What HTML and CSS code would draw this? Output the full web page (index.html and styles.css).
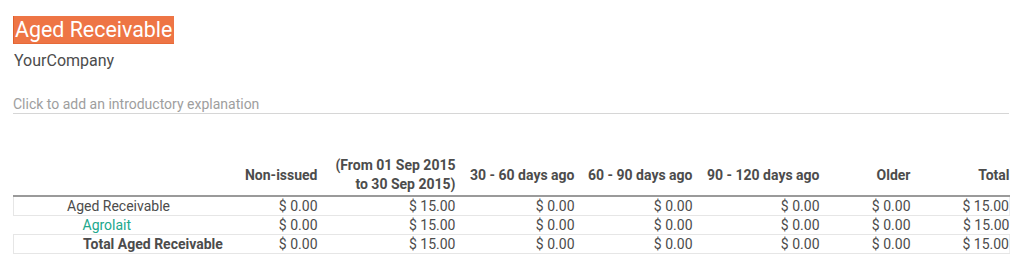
FILE: index.html
```html
<!DOCTYPE html>
<html>
<head>
<meta charset="utf-8">
<link rel="stylesheet" href="styles.css">
</head>
<body>
<div class="page">
  <div class="title-row"><span class="title">Aged Receivable</span></div>
  <div class="company">YourCompany</div>
  <div class="intro">Click to add an introductory explanation</div>
  <table class="report">
    <colgroup>
      <col class="c1"><col class="c2"><col class="c3"><col class="c4"><col class="c5"><col class="c6"><col class="c7"><col class="c8">
    </colgroup>
    <thead>
      <tr>
        <th></th>
        <th>Non-issued</th>
        <th>(From 01 Sep 2015<br>to 30 Sep 2015)</th>
        <th>30 - 60 days ago</th>
        <th>60 - 90 days ago</th>
        <th>90 - 120 days ago</th>
        <th>Older</th>
        <th>Total</th>
      </tr>
    </thead>
    <tbody>
      <tr class="boxed">
        <td class="name lvl1">Aged Receivable</td>
        <td>$ 0.00</td><td>$ 15.00</td><td>$ 0.00</td><td>$ 0.00</td><td>$ 0.00</td><td>$ 0.00</td><td>$ 15.00</td>
      </tr>
      <tr>
        <td class="name lvl2 partner">Agrolait</td>
        <td>$ 0.00</td><td>$ 15.00</td><td>$ 0.00</td><td>$ 0.00</td><td>$ 0.00</td><td>$ 0.00</td><td>$ 15.00</td>
      </tr>
      <tr class="boxed">
        <td class="name lvl2 total">Total Aged Receivable</td>
        <td>$ 0.00</td><td>$ 15.00</td><td>$ 0.00</td><td>$ 0.00</td><td>$ 0.00</td><td>$ 0.00</td><td>$ 15.00</td>
      </tr>
    </tbody>
  </table>
</div>
</body>
</html>
```

FILE: styles.css
```css
html, body {
  margin: 0;
  padding: 0;
  background: #ffffff;
}
body {
  font-family: Roboto, "Liberation Sans", sans-serif;
  color: #4c4c4c;
}
.page {
  padding: 16px 0 0 13px;
  width: 996px;
}
.title-row {
  display: flex;
}
.title {
  background: #ee7545;
  color: #ffffff;
  font-size: 21.4px;
  line-height: 27px;
  padding: 0 2px 0 1px;
  border-left: 1px solid #e0602c;
  border-bottom: 1px solid #e66a38;
}
.company {
  margin-top: 7px;
  font-size: 16px;
  line-height: 19px;
  color: #4c4c4c;
  padding-left: 1px;
}
.intro {
  margin-top: 25px;
  font-size: 14px;
  line-height: 18px;
  color: #9e9e9e;
  padding-bottom: 0;
  border-bottom: 1px solid #d6d6d6;
}
.report {
  margin-top: 41px;
  width: 996px;
  border-collapse: collapse;
  table-layout: fixed;
  font-size: 14px;
}
.c1 { width: 217px; }
.c2 { width: 87px; }
.c3 { width: 138px; }
.c4 { width: 119px; }
.c5 { width: 118px; }
.c6 { width: 127px; }
.c7 { width: 91px; }
.c8 { width: 99px; }
.report th {
  font-weight: bold;
  text-align: right;
  line-height: 19px;
  padding: 1px 0 1px 0;
  vertical-align: middle;
  color: #4c4c4c;
  border-bottom: 2px solid #9a9a9a;
}
.report td {
  text-align: right;
  line-height: 18px;
  padding: 0;
  border-bottom: 1px solid #e6e6e6;
  white-space: nowrap;
}
.report tr.boxed td {
  border-top: 1px solid #e6e6e6;
}
.report tr.boxed td.name {
  border-left: 1px solid #e6e6e6;
}
.report tr.boxed td:last-child {
  border-right: 1px solid #eeeeee;
}
.report td.name {
  text-align: left;
}
.report td.lvl1 { padding-left: 53px; }
.report td.lvl2 { padding-left: 69px; }
.partner { color: #21a88c; }
.total { font-weight: bold; }
```
